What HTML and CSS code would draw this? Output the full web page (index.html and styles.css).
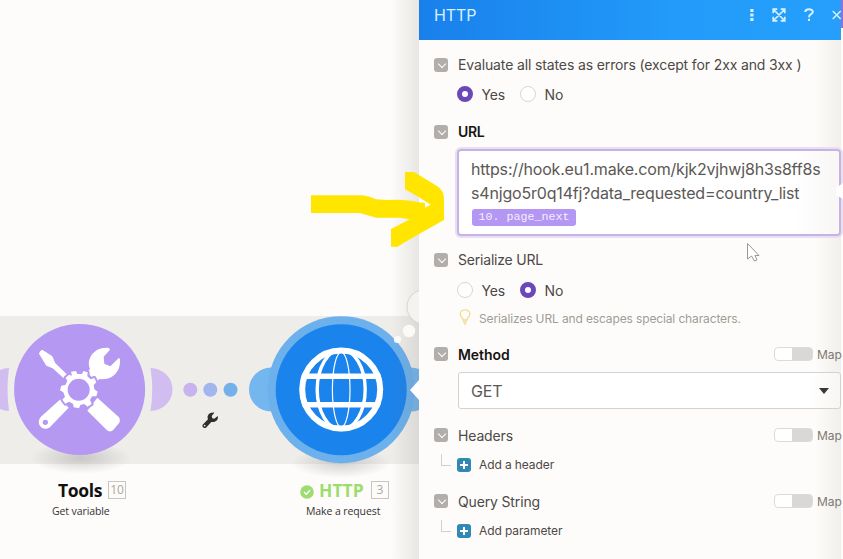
FILE: index.html
```html
<!DOCTYPE html>
<html lang="en">
<head>
<meta charset="utf-8">
<title>HTTP module</title>
<link rel="stylesheet" href="styles.css">
</head>
<body>
<div class="app">
  <main class="canvas">
    <svg class="diagram" width="419" height="559" viewBox="0 0 419 559">
      <defs>
        <linearGradient id="edge" x1="0" x2="1" y1="0" y2="0">
          <stop offset="0" stop-color="#6e6a64" stop-opacity="0"/>
          <stop offset="1" stop-color="#6e6a64" stop-opacity=".15"/>
        </linearGradient>
        <radialGradient id="shadow">
          <stop offset="0" stop-color="#777" stop-opacity=".32"/>
          <stop offset="1" stop-color="#777" stop-opacity="0"/>
        </radialGradient>
        <clipPath id="disc"><circle cx="341.2" cy="389.6" r="42"/></clipPath>
      </defs>
      <rect y="316" width="419" height="148" fill="#eeedea"/>
      <ellipse cx="81" cy="458" rx="50" ry="16" fill="url(#shadow)"/>
      <ellipse cx="341" cy="463" rx="50" ry="15" fill="url(#shadow)"/>
      <!-- connectors -->
      <path d="M150.500 368A22 21.500 0 0 1 150.500 411Q154 389 150.500 368Z" fill="#d2bdf0"/>
      <path d="M0 370Q4 368 9 368Q6 389 9 411Q4 411 0 409Z" fill="#d2bdf0"/>
      <circle cx="190.300" cy="389.700" r="7" fill="#c9b3ef"/>
      <circle cx="210.300" cy="389.700" r="7" fill="#a1b5ee"/>
      <circle cx="230.500" cy="389.700" r="7" fill="#74b1eb"/>
      <circle cx="271" cy="389.500" r="22" fill="#74b6ee"/>
      <circle cx="411" cy="389.500" r="22" fill="#74b6ee"/>
      <!-- tools module -->
      <circle cx="79.600" cy="389.400" r="65.500" fill="#b498f1"/>
      <g transform="translate(0 300) scale(.33333)" fill="#fff">
        <path d="M117 161Q120 151 128 150L157 169L166 190L203 225L191 235L158 205L139 197Z"/>
        <path d="M262 217L270 206C258 180 280 139 327 144L330 149L311 170L313 191L331 199L357 173L360 178C363 218 333 243 299 237L287 245Z"/>
        <path fill-rule="evenodd" d="M181 298L206 323L151 380C132 398 104 374 122 351ZM136 359A8 8 0 1 0 136 375A8 8 0 1 0 136 359Z"/>
        <path d="M292 293L356 351Q362 358 358 368L339 391Q330 398 321 391L262 332Z"/>
        <path stroke="#b498f1" stroke-width="12" stroke-linejoin="round" paint-order="stroke" d="M216 227L213 215L228 213L232 222H246L250 213L263 217L262 229L272 238L283 234L289 247L281 255L283 268L293 275L289 289L276 289L270 300L275 312L262 320L253 312L241 315L237 325L221 322L219 311L207 305L196 311L187 299L195 290L190 277L180 271L184 257L196 255L202 243L197 233L207 224Z"/>
        <circle cx="236" cy="269" r="33" fill="#b498f1"/>
      </g>
      <!-- http module -->
      <circle cx="341.200" cy="389.700" r="73.500" fill="#6cb0ec"/>
      <circle cx="341.200" cy="389.700" r="65.500" fill="#1b83ec"/>
      <g fill="none" stroke="#fff">
        <circle cx="341.200" cy="389.600" r="39" stroke-width="6"/>
        <ellipse cx="341.200" cy="389.600" rx="24" ry="40" stroke-width="3.400"/>
        <ellipse cx="341.200" cy="389.600" rx="8.800" ry="37.500" stroke-width="1.200"/>
        <path clip-path="url(#disc)" d="M300 376.300H383M300 404.800H383" stroke-width="5.600"/>
      </g>
      <rect x="391" width="28" height="559" fill="url(#edge)"/>
      <circle cx="424" cy="307" r="17" fill="#f5f3f0" stroke="#d6d4d0"/>
      <circle cx="409" cy="331" r="6.200" fill="#fbfaf8"/>
      <circle cx="397.500" cy="339.500" r="3.600" fill="#fbfaf8"/>
      <!-- wrench on the link -->
      <g transform="translate(200 280) scale(.33333)" fill="#302d2b">
        <path d="M8 434L24 418C19 405 30 396 43 398L35 408L37 415L43 416L53 408C57 420 45 428 34 426L18 443C11 446 5 440 8 434Z"/>
        <circle cx="14" cy="437" r="2.500" fill="#eeedea"/>
      </g>
      <path d="M410 390L419 380V400Z" fill="#fff"/>
    </svg>
    <div class="node tools">
      <div class="title"><b>Tools</b><span class="num">10</span></div>
      <div class="sub">Get variable</div>
    </div>
    <div class="node http">
      <div class="title"><svg class="ok" width="14" height="14" viewBox="0 0 14 14"><circle cx="7" cy="7" r="6.800" fill="#9ddc70"/><path d="M4 7L6.300 9.200L10 5.300" fill="none" stroke="#fff" stroke-width="1.400"/></svg><b>HTTP</b><span class="num">3</span></div>
      <div class="sub">Make a request</div>
    </div>
  </main>

  <section class="panel">
    <header class="bar">
      <span class="name">HTTP</span>
      <svg width="4" height="14" viewBox="0 0 4 14" fill="#d5f1ff"><rect x=".3" y="1" width="3.200" height="3"/><rect x=".3" y="5.500" width="3.200" height="3"/><rect x=".3" y="10" width="3.200" height="3"/></svg>
      <svg class="expand" width="14" height="14" viewBox="0 0 14 14" fill="none" stroke="#d5f1ff" stroke-width="1.700"><path d="M1.200 5.300V1.200H5.300M8.700 1.200H12.800V5.300M12.800 8.700V12.800H8.700M5.300 12.800H1.200V8.700M1.500 1.500L12.500 12.500M12.500 1.500L1.500 12.500"/></svg>
      <svg class="help" width="10" height="14" viewBox="0 0 10 14" fill="none" stroke="#d5f1ff" stroke-width="2"><path d="M1.200 4C1.200 .3 8.800 .3 8.800 3.800C8.800 6.300 5 6 5 9.200M5 10.800V13"/></svg>
      <svg class="close" width="9" height="10" viewBox="0 0 9 10" fill="none" stroke="#d5f1ff" stroke-width="1.500"><path d="M.7 1L8.700 9M8.700 1L.7 9"/></svg>
    </header>

    <div class="form">
      <div class="row first"><i class="tick"></i><span class="label evaluate">Evaluate all states as errors (except for 2xx and 3xx )</span></div>
      <div class="radios"><i class="radio on"></i><span>Yes</span><i class="radio"></i><span>No</span></div>

      <div class="row url"><i class="tick"></i><b class="label">URL</b></div>
      <div class="field">
        <div class="line">https://hook.eu1.make.com/kjk2vjhwj8h3s8ff8s</div>
        <div class="line">s4njgo5r0q14fj?data_requested=country_list</div>
        <span class="pill">10. page_next</span>
      </div>

      <div class="row serialize"><i class="tick"></i><span class="label">Serialize URL</span></div>
      <div class="radios"><i class="radio"></i><span>Yes</span><i class="radio on"></i><span>No</span></div>
      <div class="hint"><svg width="12" height="16" viewBox="0 0 12 16" fill="none" stroke="#f0dc92" stroke-width="1.300"><path d="M4 11C4 8.500 1.200 8 1.200 5C1.200-.5 10.800-.5 10.800 5C10.800 8 8 8.500 8 11ZM4 13H8M5 15H7"/></svg><span>Serializes URL and escapes special characters.</span></div>

      <div class="row method"><i class="tick"></i><b class="label">Method</b><i class="switch"></i><span class="map">Map</span></div>
      <div class="select"><span>GET</span><i class="caret"></i></div>

      <div class="row headers"><i class="tick"></i><span class="label">Headers</span><i class="switch"></i><span class="map">Map</span></div>
      <div class="add"><i class="branch"></i><i class="plus"></i><span>Add a header</span></div>

      <div class="row query"><i class="tick"></i><span class="label">Query String</span><i class="switch"></i><span class="map">Map</span></div>
      <div class="add"><i class="branch"></i><i class="plus"></i><span>Add parameter</span></div>
    </div>
  </section>
  <div class="rail"></div>

  <svg class="overlay" width="843" height="559" viewBox="0 0 843 559">
    <path transform="translate(300 140) scale(.33333)" fill="#ffe500" d="M33 166H188Q210 169 228 178L260 180Q315 176 355 187L375 189V203L392 194L355 170L315 148V96H342L412 139Q432 153 432 176V240L345 289L292 320H273V267L330 238L300 233H228L180 219H33Z"/>
    <path d="M843 183L836 188V195L843 199Z" fill="#fffefd"/>
    <path d="M747.500 243.500V259L751.500 256L754.500 261L757 260L755 255.500H759Z" fill="#fff" stroke="#9b9792" stroke-width="1"/>
  </svg>
</div>
</body>
</html>
```
FILE: styles.css
```css
* { box-sizing: border-box; }
body { margin: 0; overflow: hidden; background: #fefcfa; font-family: Inter, sans-serif; color: #4c4946; }
.app { position: relative; display: flex; width: 843px; height: 559px; overflow: hidden; }
.canvas { position: relative; flex: 0 0 419px; font-family: "Open Sans", sans-serif; }
.diagram { display: block; }
.overlay { position: absolute; inset: 0; pointer-events: none; }

.node { position: absolute; top: 477.5px; white-space: nowrap; }
.tools { left: 52px; }
.http { left: 300px; }
.title { display: flex; align-items: center; height: 25px; font-size: 17.5px; line-height: 25px; color: #111; }
.tools .title { padding-left: 6px; }
.tools b { width: 50px; letter-spacing: -.35px; }
.http b { width: 52px; margin-left: 5px; color: #9ddc70; }
.ok { margin-top: 3px; }
.num { width: 18px; height: 18px; border: 1px solid #c9c6c2; font-size: 12px; line-height: 16px; text-align: center; color: #aaa7a3; }
.sub { height: 16px; font-size: 10.5px; letter-spacing: -.1px; line-height: 16px; color: #333; }
.http .sub { padding-left: 6px; }

.panel { flex: 0 0 422px; background: linear-gradient(90deg, #fefcfa 94%, #f1efeb); }
.bar { display: flex; align-items: center; height: 40px; padding: 0 0 11px 15px; background: linear-gradient(90deg, #1980eb, #229bfa 60%, #259ffb); color: #d5f1ff; }
.name { flex: 1; font-size: 16px; letter-spacing: -.1px; }
.bar svg { flex: none; }
.bar svg:nth-child(2) { margin-right: -1px; }
.expand { margin-left: 19px; }
.help { margin-left: 18px; }
.close { margin-left: 18px; }
.rail { flex: 0 0 2px; height: 28px; background: #9471d4; }

.row { display: flex; align-items: center; height: 24px; padding-left: 15px; font-size: 14px; }
.first { margin-top: 13px; }
.tick { position: relative; flex: none; width: 14px; height: 14px; margin-right: 10px; border-radius: 3px; background: #b2aeac; }
.tick::after { content: ""; position: absolute; left: 4.5px; top: 3px; width: 5px; height: 5px; border: solid #fff; border-width: 0 1.8px 1.8px 0; transform: rotate(45deg); }
.label { margin-top: -1px; white-space: nowrap; letter-spacing: -.04px; }
.evaluate { letter-spacing: -.13px; }
b.label { color: #171513; font-weight: 600; }
.radios { display: flex; align-items: center; height: 34px; padding-left: 38px; font-size: 14px; }
.radio { width: 16px; height: 16px; border: 1px solid #d9d6d1; border-radius: 50%; background: #fff; }
.radio.on { border: 5px solid #6c47b8; }
.radios span { margin-left: 8.5px; letter-spacing: -.15px; }
.radios span + .radio { margin-left: 15px; }
.url { margin-top: 9px; }
.url .label { letter-spacing: -.3px; }
.field { width: 384px; height: 87px; margin: 5px 0 0 38px; padding: 6px 0 0 12px; border: 2px solid #c6b3e3; border-radius: 4px; box-shadow: 0 0 0 2px #e8e0f2; background: linear-gradient(90deg, #fff 88%, #f8f7f6); font-size: 16px; color: #5b5855; }
.line { height: 24px; line-height: 24px; white-space: nowrap; letter-spacing: -.18px; }
.pill { display: block; width: 104px; height: 17px; margin: 4px 0 0 1px; border-radius: 3px; background: #b397f2; color: #f5edff; font: 11.67px/17px "Liberation Mono", monospace; text-align: center; white-space: pre; }
.serialize { margin-top: 12px; }
.serialize .label { letter-spacing: -.2px; }
.serialize + .radios { padding-top: 2px; }
.hint { display: flex; align-items: center; height: 22px; padding-left: 40px; font-size: 12px; color: #a09c97; }
.hint span { margin: 2px 0 0 8px; white-space: nowrap; letter-spacing: -.13px; }
.method { margin-top: 14px; }
.method .label, .headers .label, .query .label { margin-top: 0; }
.switch { display: block; width: 39px; height: 14px; margin-left: auto; border: 1px solid #dedbd7; border-radius: 4px; background: linear-gradient(90deg, #fff 17px, #dad8d6 17px); }
.map { width: 24px; margin-left: 4px; font-size: 12px; color: #7c7975; }
.select { display: flex; align-items: center; justify-content: space-between; width: 383px; height: 37px; margin: 6px 0 0 39px; padding: 0 11px 0 12px; border: 1px solid #d4d2cf; border-radius: 3px; background: linear-gradient(90deg, #fff 92%, #f7f6f4); font-size: 16px; letter-spacing: -.2px; color: #5b5855; }
.caret { border: 5.5px solid transparent; border-top: 6px solid #3a3735; border-bottom: 0; }
.headers { margin-top: 14px; }
.headers .label { letter-spacing: -.15px; }
.query .label { letter-spacing: -.15px; }
.add { display: flex; align-items: center; height: 33px; padding-left: 22px; font-size: 12px; }
.branch { width: 10px; height: 12px; margin: -8px 6px 0 0; border: solid #d3d0cb; border-width: 0 0 1px 1px; }
.plus { width: 14px; height: 14px; border-radius: 3px; background: linear-gradient(#fff, #fff) center / 8px 2px no-repeat, linear-gradient(#fff, #fff) center / 2px 8px no-repeat, #3088b5; }
.add span { margin-left: 8px; white-space: nowrap; letter-spacing: -.1px; }
.add .plus, .add span { position: relative; top: 1px; }
.query { margin-top: 9px; }
```
